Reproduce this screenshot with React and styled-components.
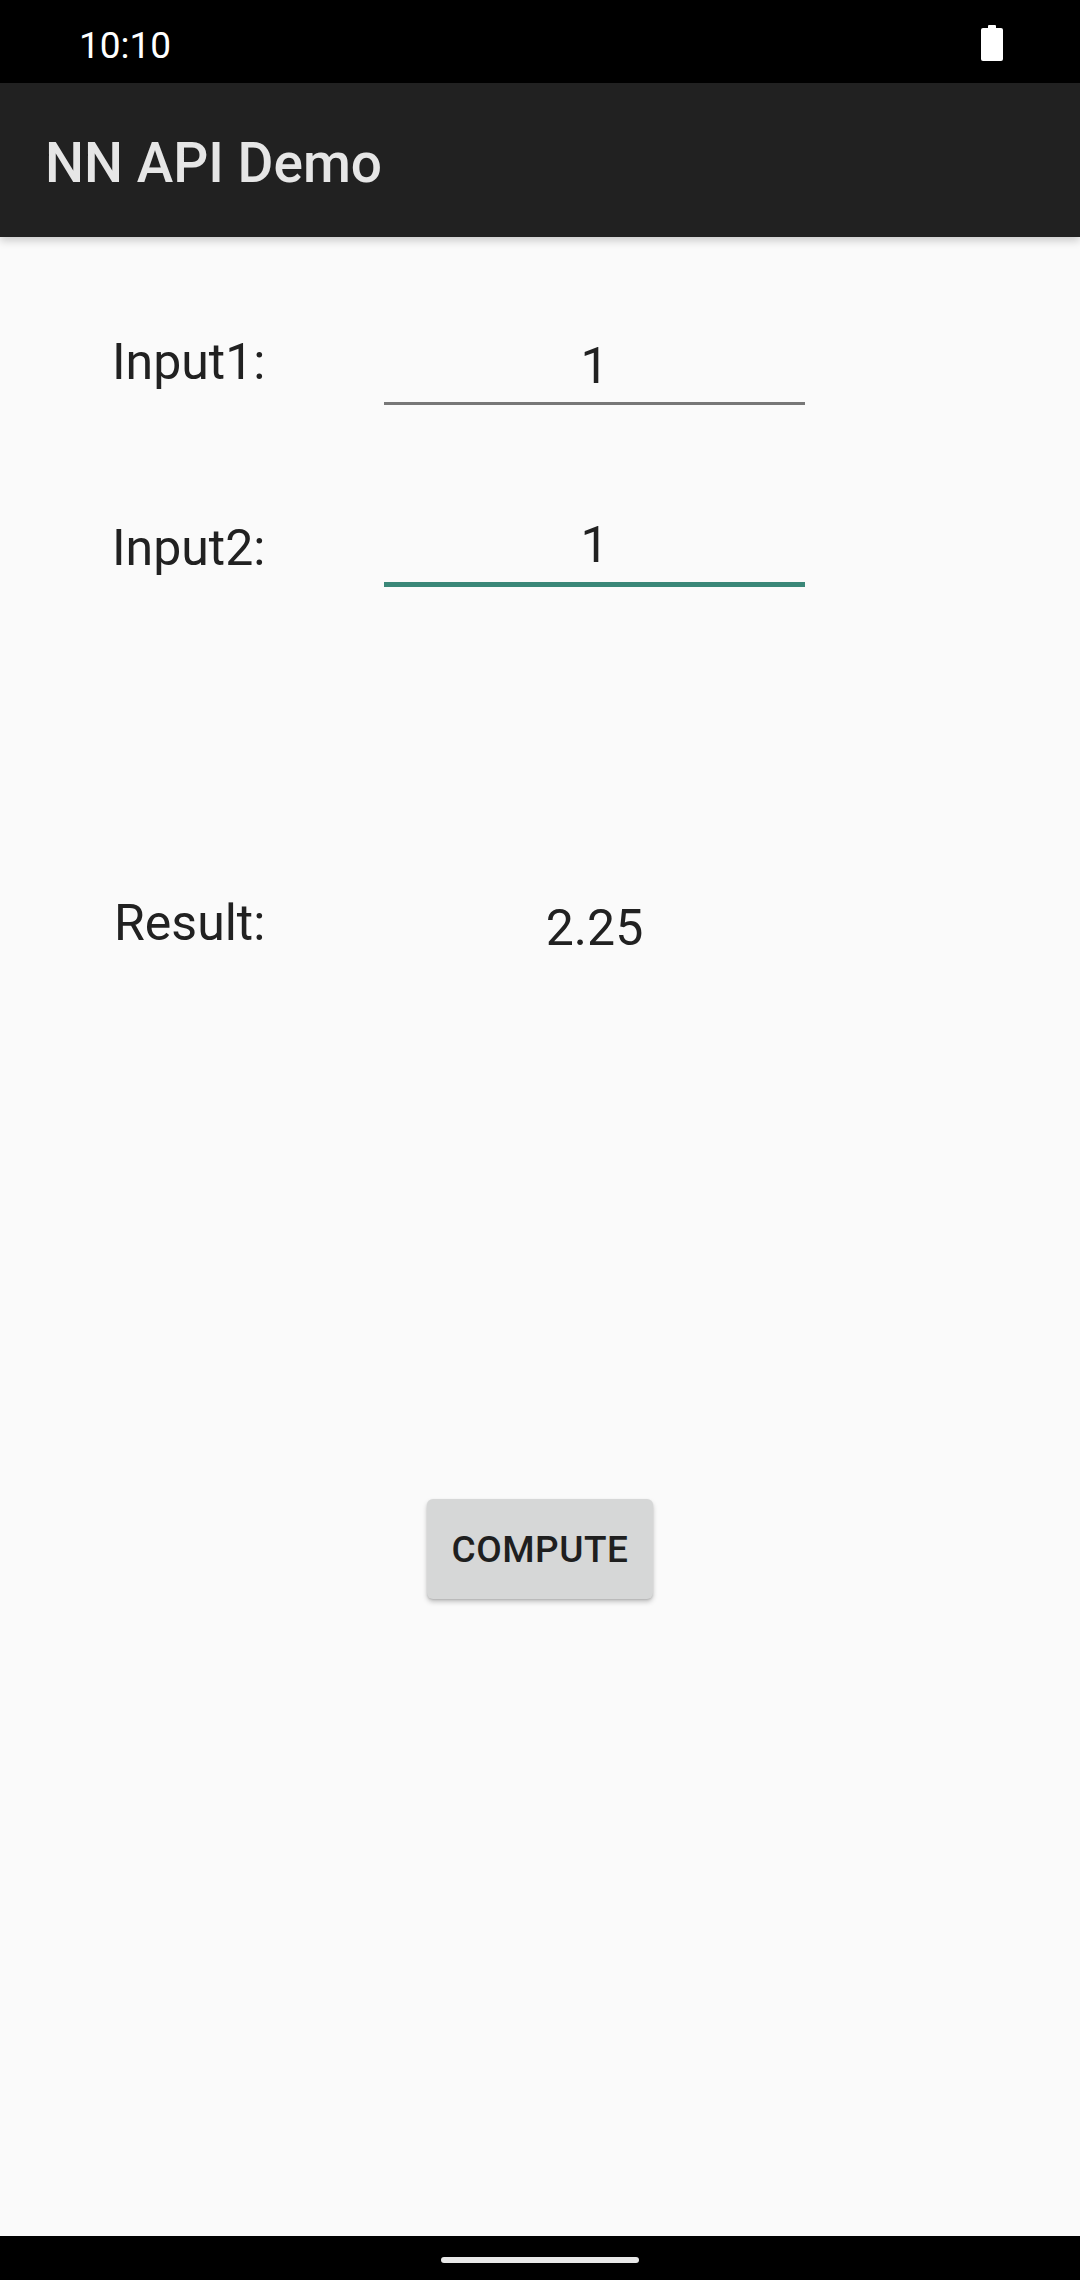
import React from "react";
import styled, { createGlobalStyle } from "styled-components";

const GlobalStyle = createGlobalStyle`
  html, body {
    margin: 0;
    padding: 0;
    background: #fafafa;
  }
  body {
    font-family: Roboto, "Noto Sans", "Liberation Sans", sans-serif;
  }
`;

const Screen = styled.div`
  width: 1080px;
  height: 2280px;
  display: flex;
  flex-direction: column;
  background: #fafafa;
  overflow: hidden;
`;

const StatusBar = styled.div`
  height: 83px;
  flex-shrink: 0;
  background: #000;
  display: flex;
  align-items: flex-start;
  justify-content: space-between;
  padding: 25px 77px 0 79px;
  box-sizing: border-box;
`;

const Clock = styled.span`
  color: #fff;
  font-size: 37px;
  line-height: 42px;
`;

const AppBar = styled.header`
  height: 154px;
  flex-shrink: 0;
  background: #212121;
  padding: 48px 0 0 45px;
  box-sizing: border-box;
  box-shadow: 0 4px 8px rgba(0, 0, 0, 0.18);
  position: relative;
  z-index: 1;
`;

const Title = styled.h1`
  margin: 0;
  color: #e6e6e6;
  font-size: 55px;
  font-weight: 500;
  line-height: 64px;
`;

const Content = styled.main`
  flex: 1;
  display: flex;
  flex-direction: column;
  padding-top: 95px;
`;

const Row = styled.div`
  display: flex;
  align-items: flex-start;
  padding-left: 112px;
  margin-top: ${p => p.gap || 0}px;
`;

const Label = styled.label`
  width: 272px;
  margin-top: ${p => p.shift || 0}px;
  padding-left: ${p => p.indent || 0}px;
  box-sizing: border-box;
  color: #212121;
  font-size: 50px;
  line-height: 60px;
`;

const Field = styled.input`
  width: 421px;
  height: 60px;
  box-sizing: content-box;
  padding: ${p => (p.focused ? "0 0 7px" : "4px 0 6px")};
  margin: 0;
  border: none;
  border-bottom: ${p => (p.focused ? "5px solid #3a8778" : "3px solid #777")};
  background: transparent;
  outline: none;
  text-align: center;
  color: #212121;
  font-family: inherit;
  font-size: 50px;
  line-height: 60px;
`;

const Value = styled.div`
  width: 421px;
  padding-top: 5px;
  text-align: center;
  color: #212121;
  font-size: 50px;
  line-height: 60px;
`;

const ButtonRow = styled.div`
  display: flex;
  justify-content: center;
  margin-top: 541px;
`;

const Button = styled.button`
  width: 226px;
  height: 100px;
  border: none;
  border-radius: 6px;
  background: #d6d7d7;
  color: #1f1f1f;
  font-family: inherit;
  font-size: 37px;
  font-weight: 500;
  letter-spacing: 0.5px;
  cursor: pointer;
  box-shadow: 0 3px 5px rgba(0, 0, 0, 0.22), 0 1px 2px rgba(0, 0, 0, 0.12);
`;

const NavBar = styled.div`
  height: 44px;
  flex-shrink: 0;
  background: #000;
  display: flex;
  justify-content: center;
  padding-top: 21px;
  box-sizing: border-box;
`;

const Handle = styled.div`
  width: 198px;
  height: 6px;
  border-radius: 3px;
  background: #e8e8e8;
`;

const Battery = () => (
  <svg width="22" height="36" viewBox="0 0 22 36">
    <rect x="7" y="0" width="8" height="4" rx="1" fill="#fff" />
    <rect x="0" y="3" width="22" height="33" rx="2" fill="#fff" />
  </svg>
);

export default function App() {
  return (
    <Screen>
      <GlobalStyle />
      <StatusBar>
        <Clock>10:10</Clock>
        <Battery />
      </StatusBar>
      <AppBar>
        <Title>NN API Demo</Title>
      </AppBar>
      <Content>
        <Row>
          <Label>Input1:</Label>
          <Field defaultValue="1" />
        </Row>
        <Row gap={110}>
          <Label shift={3}>Input2:</Label>
          <Field focused defaultValue="1" />
        </Row>
        <Row gap={306}>
          <Label indent={2}>Result:</Label>
          <Value>2.25</Value>
        </Row>
        <ButtonRow>
          <Button>COMPUTE</Button>
        </ButtonRow>
      </Content>
      <NavBar>
        <Handle />
      </NavBar>
    </Screen>
  );
}
